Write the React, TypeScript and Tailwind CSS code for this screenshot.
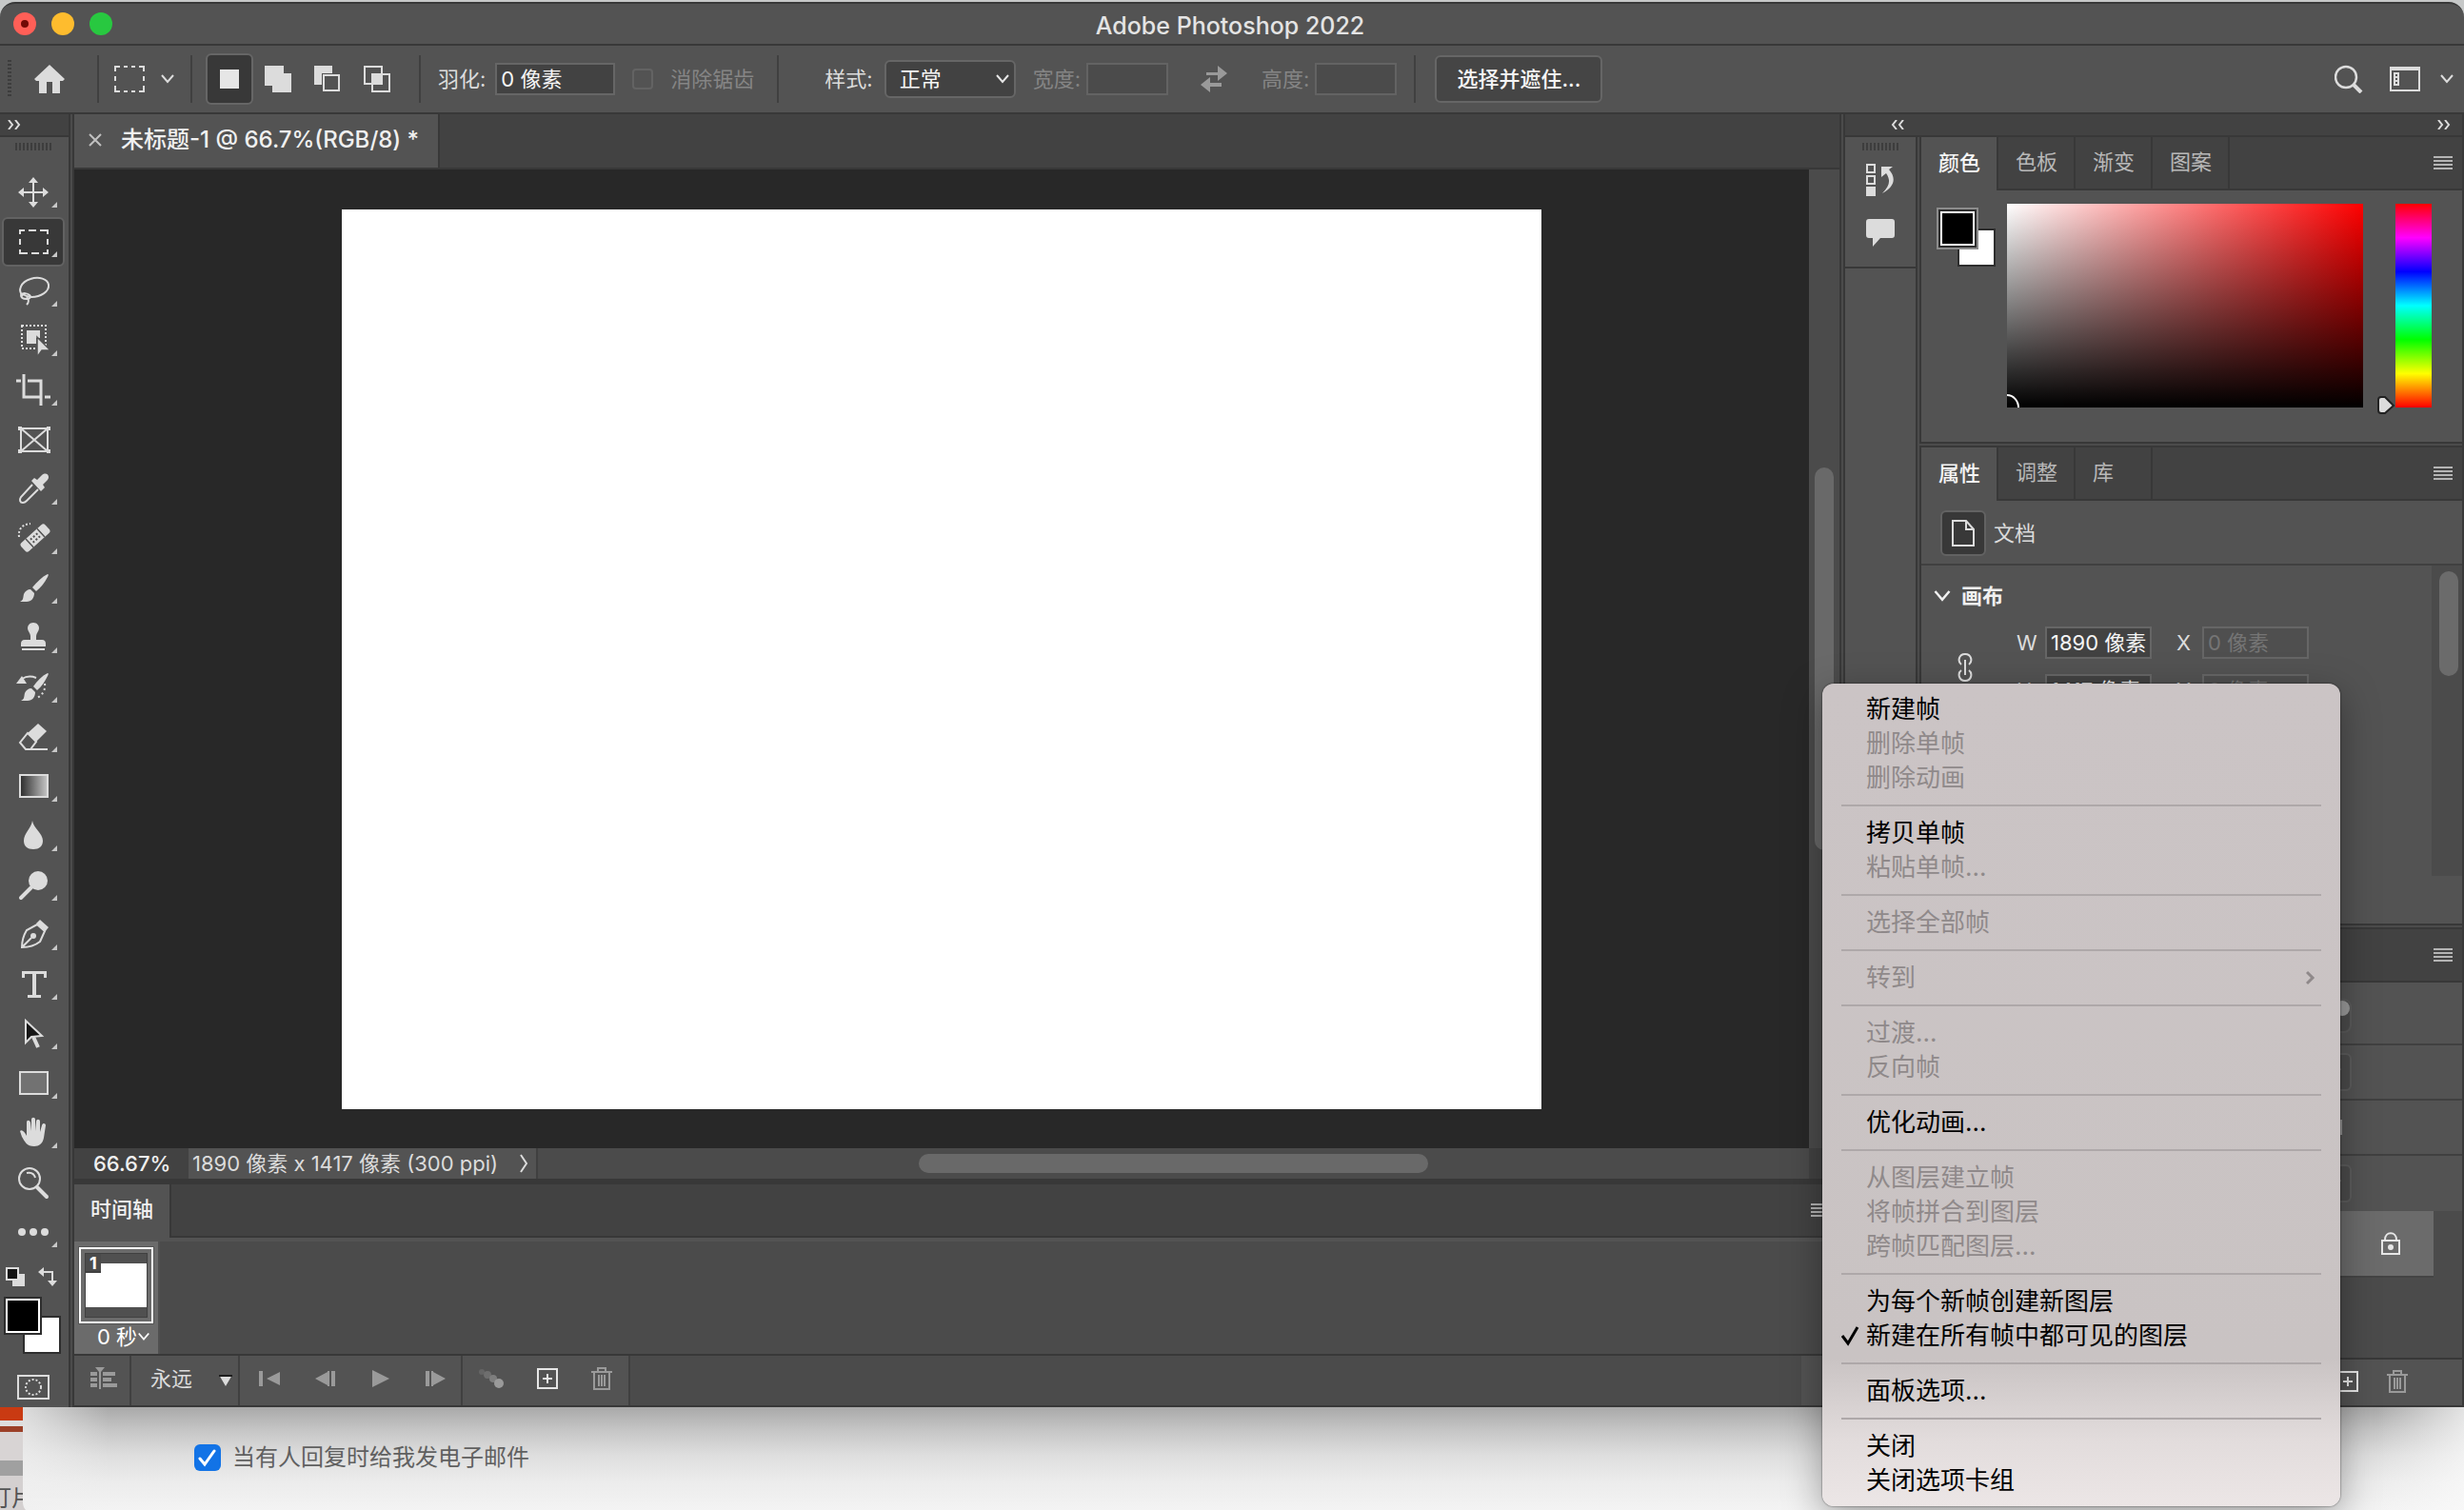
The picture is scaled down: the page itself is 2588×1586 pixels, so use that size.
import { useState, type ReactNode } from 'react'

type ToolType = {
  name: string
  icon: ReactNode
  more?: boolean
}

type MenuItemType = {
  label: string
  disabled?: boolean
  checked?: boolean
  submenu?: boolean
}

const tools: ToolType[] = [
  {
    name: '移动工具',
    more: true,
    icon: (
      <>
        <path d="M18 6v24M6 18h24" stroke="currentColor" strokeWidth="2" />
        <path d="M18 2l5 6H13zM18 34l5-6H13zM2 18l6-5v10zM34 18l-6-5v10z" fill="currentColor" />
      </>
    ),
  },
  {
    name: '矩形选框工具',
    more: true,
    icon: (
      <path
        d="M4 10V6h5M13 6h8M25 6h8v4M33 15v6M33 26v4h-5M24 30h-8M12 30H4v-4M4 21v-6"
        stroke="currentColor"
        strokeWidth="2"
        fill="none"
      />
    ),
  },
  {
    name: '套索工具',
    more: true,
    icon: (
      <g stroke="currentColor" strokeWidth="2" fill="none">
        <path d="M7 23C1 17 5 8 15 5c9-3 18 0 19 6 1 7-8 13-18 13-3 0-6-1-9-3" />
        <path d="M5 22c2-3 7-2 9 0s0 4-3 4-6-1-6-4zM11 24c3 3 2 6 0 8" />
      </g>
    ),
  },
  {
    name: '对象选择工具',
    more: true,
    icon: (
      <>
        <rect x="6" y="2" width="25" height="24" fill="none" stroke="currentColor" strokeWidth="2" strokeDasharray="2 2" />
        <path d="M11 7h14v8h-4v6H11z" fill="currentColor" />
        <path d="M22 14v21l5-7h9z" fill="currentColor" stroke="#535353" strokeWidth="1.5" />
      </>
    ),
  },
  {
    name: '裁剪工具',
    more: true,
    icon: <path d="M8 1v24h18M30 25h6M0 8h5M12 8h14v26" stroke="currentColor" strokeWidth="3" fill="none" />,
  },
  {
    name: '图框工具',
    icon: (
      <>
        <path d="M5 6h28v24H5zM5 6l28 24M33 6L5 30" stroke="currentColor" strokeWidth="2" fill="none" />
        <path d="M2 4h4v4H2zM32 4h4v4h-4zM2 28h4v4H2zM32 28h4v4h-4z" fill="currentColor" />
      </>
    ),
  },
  {
    name: '吸管工具',
    more: true,
    icon: (
      <>
        <path d="M17 13L5 26c-2 3-1 6 2 6 2 0 3-1 4-2l12-12" stroke="currentColor" strokeWidth="2" fill="none" />
        <path d="M16 9l3-3 3 2 5-5c5-4 9 1 6 5l-5 5 2 3-4 4z" fill="currentColor" />
      </>
    ),
  },
  {
    name: '污点修复画笔工具',
    more: true,
    icon: (
      <>
        <g transform="rotate(-42 20 17)">
          <rect x="3" y="11" width="34" height="12" rx="3" fill="currentColor" />
          <path d="M12 11v12M28 11v12" stroke="#535353" strokeWidth="1.5" />
          <path d="M15 14h2v2h-2zM19 14h2v2h-2zM23 14h2v2h-2zM15 18h2v2h-2zM19 18h2v2h-2zM23 18h2v2h-2z" fill="#535353" />
        </g>
        <path d="M3 16C2 8 6 3 15 2" stroke="currentColor" strokeWidth="2" strokeDasharray="2 2" fill="none" />
      </>
    ),
  },
  {
    name: '画笔工具',
    more: true,
    icon: (
      <path
        d="M33 3c1 0 1 1 0 3-3 6-7 11-12 15l-4-4C22 11 27 6 33 3zM15 19l4 4c0 5-3 9-8 9H4c4-2 3-4 4-8 1-3 4-5 7-5z"
        fill="currentColor"
      />
    ),
  },
  {
    name: '仿制图章工具',
    more: true,
    icon: (
      <path
        d="M18 2c4 0 6 3 6 6s-3 5-3 8v4h6c3 0 4 2 4 4v3H5v-3c0-2 1-4 4-4h6v-4c0-3-3-5-3-8s2-6 6-6zM6 29h24v2H6z"
        fill="currentColor"
      />
    ),
  },
  {
    name: '历史记录画笔工具',
    more: true,
    icon: (
      <>
        <path
          d="M33 3c1 0 1 1 0 3-3 6-6 11-11 15l-4-4C22 11 27 6 33 3zM16 19l4 4c0 5-3 9-8 9H5c4-2 3-4 4-8 1-3 4-5 7-5z"
          fill="currentColor"
        />
        <path d="M0 14L6 6l5 8z" fill="currentColor" />
        <path d="M6 9c5-3 10-3 15-1" stroke="currentColor" strokeWidth="2" fill="none" />
        <path d="M30 14c1 6-2 12-8 15" stroke="currentColor" strokeWidth="2" strokeDasharray="2 3" fill="none" />
      </>
    ),
  },
  {
    name: '橡皮擦工具',
    more: true,
    icon: (
      <>
        <path d="M23 4l9 8-11 11-9-9z" fill="currentColor" />
        <path d="M12 14l9 9-6 8H10l-6-7zM14 31h19" stroke="currentColor" strokeWidth="2" fill="none" />
      </>
    ),
  },
  {
    name: '渐变工具',
    more: true,
    icon: (
      <>
        <defs>
          <linearGradient id="tool-gradient">
            <stop offset="0" stopColor="#2a2a2a" />
            <stop offset="1" stopColor="#c8c8c8" />
          </linearGradient>
        </defs>
        <rect x="4" y="6" width="29" height="23" fill="url(#tool-gradient)" stroke="currentColor" strokeWidth="2" />
      </>
    ),
  },
  {
    name: '模糊工具',
    more: true,
    icon: <path d="M17 2c1 8 11 13 11 21 0 6-4 9-10 9S8 29 8 23C8 15 16 10 17 2z" fill="currentColor" />,
  },
  {
    name: '减淡工具',
    more: true,
    icon: (
      <>
        <circle cx="23" cy="13" r="10" fill="currentColor" />
        <path d="M16 20L5 31" stroke="currentColor" strokeWidth="4" strokeLinecap="round" />
      </>
    ),
  },
  {
    name: '钢笔工具',
    more: true,
    icon: (
      <>
        <path d="M6 31c0-7 2-13 5-18l11-6 8 7-5 11c-5 4-11 6-19 6zM6 31l10-10" stroke="currentColor" strokeWidth="2" fill="none" />
        <circle cx="18" cy="19" r="3" fill="currentColor" />
        <path d="M21 6l4-4 9 8-4 5z" fill="currentColor" />
      </>
    ),
  },
  {
    name: '横排文字工具',
    more: true,
    icon: <path d="M6 4h26v7h-3V7h-8v22h5v3H12v-3h5V7H9v4H6z" fill="currentColor" />,
  },
  {
    name: '路径选择工具',
    more: true,
    icon: (
      <>
        <path d="M18 21l5 11" stroke="currentColor" strokeWidth="4" />
        <path d="M10 4v23l6-6 11-1z" fill="#161616" stroke="currentColor" strokeWidth="2" />
      </>
    ),
  },
  {
    name: '矩形工具',
    more: true,
    icon: <rect x="4" y="6" width="29" height="23" fill="#727272" stroke="currentColor" strokeWidth="2" />,
  },
  {
    name: '抓手工具',
    more: true,
    icon: (
      <path
        d="M4 16c2-2 5 1 7 5V7c0-3 3-3 4 0l1 9V4c0-3 4-3 4 0v12l1-10c0-3 4-3 4 0v11l2-7c1-3 4-2 4 0l-2 13c-1 6-5 9-10 9-8 0-10-5-13-10z"
        fill="currentColor"
      />
    ),
  },
  {
    name: '缩放工具',
    icon: (
      <>
        <circle cx="14" cy="14" r="11" fill="none" stroke="currentColor" strokeWidth="2" />
        <path d="M11 8c5-1 8 1 9 5" stroke="currentColor" strokeWidth="2" fill="none" />
        <path d="M22 23l10 10" stroke="currentColor" strokeWidth="4" strokeLinecap="round" />
      </>
    ),
  },
  {
    name: '编辑工具栏',
    more: true,
    icon: (
      <>
        <circle cx="6" cy="18" r="4" fill="currentColor" />
        <circle cx="18" cy="18" r="4" fill="currentColor" />
        <circle cx="30" cy="18" r="4" fill="currentColor" />
      </>
    ),
  },
]

const menuGroups: MenuItemType[][] = [
  [{ label: '新建帧' }, { label: '删除单帧', disabled: true }, { label: '删除动画', disabled: true }],
  [{ label: '拷贝单帧' }, { label: '粘贴单帧...', disabled: true }],
  [{ label: '选择全部帧', disabled: true }],
  [{ label: '转到', disabled: true, submenu: true }],
  [{ label: '过渡...', disabled: true }, { label: '反向帧', disabled: true }],
  [{ label: '优化动画...' }],
  [
    { label: '从图层建立帧', disabled: true },
    { label: '将帧拼合到图层', disabled: true },
    { label: '跨帧匹配图层...', disabled: true },
  ],
  [{ label: '为每个新帧创建新图层' }, { label: '新建在所有帧中都可见的图层', checked: true }],
  [{ label: '面板选项...' }],
  [{ label: '关闭' }, { label: '关闭选项卡组' }],
]

const Chevron = ({ className = 'w-4 h-4' }: { className?: string }) => (
  <svg viewBox="0 0 16 16" className={className} fill="none" stroke="currentColor" strokeWidth="2">
    <path d="M2 4l6 7 6-7" />
  </svg>
)

const DoubleChevron = ({ left }: { left?: boolean }) => (
  <svg viewBox="0 0 14 10" className="w-3.5 h-2.5 text-[#dcdcdc]" fill="none" stroke="currentColor" strokeWidth="2">
    {left ? <path d="M6 0L2 5l4 5M13 0L9 5l4 5" /> : <path d="M1 0l4 5-4 5M8 0l4 5-4 5" />}
  </svg>
)

const PanelMenuButton = () => (
  <button aria-label="面板菜单" className="text-[#b4b4b4]">
    <svg viewBox="0 0 20 16" className="w-5 h-4" fill="currentColor">
      <path d="M0 1h20v2H0zM0 5h20v2H0zM0 9h20v2H0zM0 13h20v2H0z" />
    </svg>
  </button>
)

const Grip = () => (
  <svg viewBox="0 0 38 8" className="w-[38px] h-2" stroke="#3d3d3d" strokeWidth="2">
    <path d="M1 0v8M5 0v8M9 0v8M13 0v8M17 0v8M21 0v8M25 0v8M29 0v8M33 0v8M37 0v8" />
  </svg>
)

const PlusIcon = () => (
  <svg viewBox="0 0 24 24" className="w-6 h-6 text-[#e6e6e6]" fill="none" stroke="currentColor" strokeWidth="2">
    <path d="M2 2h20v20H2zM12 7v10M7 12h10" />
  </svg>
)

const TrashIcon = () => (
  <svg viewBox="0 0 24 26" className="w-6 h-[26px] text-[#9a9a9a]" fill="none" stroke="currentColor" strokeWidth="2">
    <path d="M1 6h22M8 5V2h8v3M4 7v17h16V7M9 9v12M12 9v12M15 9v12" />
  </svg>
)

const Divider = () => <div className="w-0.5 h-[50px] bg-[#404040] shrink-0" />

const TabBar = ({ tabs }: { tabs: string[] }) => (
  <div className="flex h-14 bg-[#424242]">
    {tabs.map((tab, i) => (
      <button
        key={tab}
        className={`w-[81px] shrink-0 pl-[18px] pb-0.5 text-left border-r-2 border-[#383838] ${
          i === 0 ? 'bg-[#535353] text-[#f5f5f5] font-medium' : 'border-b-2 text-[#b8b8b8]'
        }`}
      >
        {tab}
      </button>
    ))}
    <div className="flex-1 flex items-center justify-end pr-2.5 border-b-2 border-[#383838]">
      <PanelMenuButton />
    </div>
  </div>
)

const TitleBar = () => (
  <div className="h-11 flex items-center px-3.5 border-b-2 border-[#383838]">
    <div className="flex-1 flex gap-4">
      <button aria-label="关闭窗口" className="w-6 h-6 rounded-full bg-[#ff5f57] grid place-items-center">
        <span className="w-2 h-2 rounded-full bg-[#700a06]" />
      </button>
      <button aria-label="最小化" className="w-6 h-6 rounded-full bg-[#febc2e]" />
      <button aria-label="缩放" className="w-6 h-6 rounded-full bg-[#28c840]" />
    </div>
    <h1 className="pt-1 pr-1 text-[25px] leading-8 font-medium text-[#e4e4e4]">Adobe Photoshop 2022</h1>
    <div className="flex-1" />
  </div>
)

const OptionsBar = () => (
  <div className="h-[72px] flex items-center border-b-2 border-[#383838] pl-2 pr-2.5 whitespace-nowrap">
    <svg viewBox="0 0 4 40" className="w-1 h-10 mr-6" stroke="#3d3d3d" strokeWidth="4" strokeDasharray="2 2">
      <path d="M2 0v40" />
    </svg>
    <button aria-label="主页">
      <svg viewBox="0 0 32 30" className="w-8 h-[30px]" fill="#dcdcdc">
        <path d="M16 0l16 15-2 2h-3v13h-8V18h-6v12H5V17H2l-2-2z" />
      </svg>
    </button>
    <div className="w-[34px]" />
    <Divider />
    <button aria-label="工具预设" className="flex items-center gap-4 mx-4">
      <svg viewBox="0 0 32 28" className="w-8 h-7" stroke="#dcdcdc" strokeWidth="2" fill="none">
        <path d="M1 6V1h5M10 1h4M18 1h4M26 1h5v5M31 11v5M31 21v6h-5M22 27h-4M14 27h-4M6 27H1v-6M1 16v-5" />
      </svg>
      <Chevron className="w-4 h-4 text-[#dcdcdc]" />
    </button>
    <Divider />
    <div className="flex items-center ml-3.5 mr-[18px] text-[#dcdcdc]">
      <button aria-label="新选区" className="w-[50px] h-[54px] rounded-md bg-[#383838] border-2 border-[#666] grid place-items-center">
        <span className="w-5 h-5 bg-[#e6e6e6]" />
      </button>
      <button aria-label="添加到选区" className="w-[52px] grid place-items-center">
        <svg viewBox="0 0 28 28" className="w-7 h-7" fill="currentColor">
          <path d="M0 0h20v8h8v20H8v-7H0z" />
        </svg>
      </button>
      <button aria-label="从选区减去" className="w-[52px] grid place-items-center">
        <svg viewBox="0 0 28 28" className="w-7 h-7">
          <path d="M0 0h19v8H8v12H0z" fill="currentColor" />
          <path d="M10 10h16v16H10z" fill="none" stroke="currentColor" strokeWidth="2" />
        </svg>
      </button>
      <button aria-label="与选区交叉" className="w-[52px] grid place-items-center">
        <svg viewBox="0 0 28 28" className="w-7 h-7" stroke="currentColor" strokeWidth="2" fill="none">
          <path d="M1 1h18v18H1zM9 9h18v18H9z" />
          <path d="M9 9h10v10H9z" fill="currentColor" />
        </svg>
      </button>
    </div>
    <Divider />
    <label htmlFor="feather" className="ml-[18px] mr-2.5 text-[#dcdcdc]">羽化:</label>
    <input id="feather" defaultValue="0 像素" className="w-[126px] h-[34px] px-1 pb-1 bg-[#424242] border-2 border-[#666] text-[#f5f5f5]" />
    <input
      id="antialias"
      type="checkbox"
      disabled
      className="appearance-none w-[22px] h-[22px] mx-[18px] rounded border-2 border-[#636363]"
    />
    <label htmlFor="antialias" className="text-[#858585] mr-6">消除锯齿</label>
    <Divider />
    <label htmlFor="style" className="ml-12 mr-3 text-[#dcdcdc]">样式:</label>
    <div className="grid items-center">
      <select
        id="style"
        className="col-start-1 row-start-1 appearance-none w-[138px] h-10 pl-3.5 rounded-md bg-[#424242] border-2 border-[#666] text-[#f5f5f5]"
      >
        <option>正常</option>
      </select>
      <Chevron className="col-start-1 row-start-1 justify-self-end w-4 h-4 mr-1.5 text-[#e6e6e6] pointer-events-none" />
    </div>
    <label htmlFor="width" className="ml-[18px] mr-1.5 text-[#858585]">宽度:</label>
    <input id="width" disabled className="w-[86px] h-[34px] border-2 border-[#636363] bg-[#4b4b4b]" />
    <button aria-label="高度和宽度互换" className="ml-[34px] mr-9">
      <svg viewBox="0 0 28 28" className="w-7 h-7" fill="#9a9a9a">
        <path d="M6 7h12V0l10 8-10 8v-6H6zM22 18H10v-6L0 20l10 8v-6h12z" />
      </svg>
    </button>
    <label htmlFor="height" className="mr-1.5 text-[#858585]">高度:</label>
    <input id="height" disabled className="w-[86px] h-[34px] border-2 border-[#636363] bg-[#4b4b4b] mr-[18px]" />
    <Divider />
    <button className="ml-5 w-[176px] h-[50px] rounded-md bg-[#454545] border-2 border-[#666] text-[#f5f5f5] font-medium">选择并遮住...</button>
    <div className="flex-1" />
    <button aria-label="搜索">
      <svg viewBox="0 0 30 30" className="w-[30px] h-[30px]" fill="none" stroke="#dcdcdc">
        <circle cx="12" cy="13" r="11" strokeWidth="2.5" />
        <path d="M20 21l8 8" strokeWidth="4" />
      </svg>
    </button>
    <button aria-label="选择工作区" className="flex items-center gap-5 ml-7 text-[#dcdcdc]">
      <svg viewBox="0 0 32 26" className="w-8 h-[26px]">
        <path d="M0 0h32v26H0zM2 4v20h28V4z" fill="currentColor" fillRule="evenodd" />
        <path d="M4 6h6v14H4zM6 8v2h2V8zM6 12v2h2v-2zM6 16v2h2v-2z" fill="currentColor" fillRule="evenodd" />
      </svg>
      <Chevron className="w-4 h-4" />
    </button>
  </div>
)

const Toolbar = ({ active, onSelect }: { active: string; onSelect: (name: string) => void }) => (
  <div className="w-[78px] shrink-0 flex flex-col border-r-2 border-[#383838] bg-[#4b4b4b]">
    <div className="w-[74px] flex-1 flex flex-col bg-[#535353] border-r-2 border-[#383838]">
      <div className="h-6 bg-[#424242] border-b-2 border-[#383838] pl-2 flex items-center">
        <DoubleChevron />
      </div>
      <div className="h-8 pt-1.5 pl-4">
        <Grip />
      </div>
      {tools.map((tool) => (
        <button
          key={tool.name}
          aria-label={tool.name}
          onClick={() => onSelect(tool.name)}
          className={`w-[66px] h-[52px] ml-0.5 pl-[13px] flex items-end rounded-md border-2 text-[#dcdcdc] ${
            active === tool.name ? 'bg-[#383838] border-[#626262]' : 'border-transparent'
          }`}
        >
          <svg viewBox="0 0 36 36" className="w-9 h-9 shrink-0 self-center">
            {tool.icon}
          </svg>
          {tool.more && (
            <svg viewBox="0 0 6 6" className="w-1.5 h-1.5 mb-2 ml-px shrink-0" fill="#c8c8c8">
              <path d="M6 0v6H0z" />
            </svg>
          )}
        </button>
      ))}
      <div className="h-[42px] px-1.5 flex justify-between items-center">
        <button aria-label="默认前景色和背景色">
          <svg viewBox="0 0 20 20" className="w-5 h-5">
            <path d="M7 7h13v13H7z" fill="#dcdcdc" />
            <path d="M1 1h12v12H1z" fill="#111" stroke="#dcdcdc" strokeWidth="2" />
          </svg>
        </button>
        <button aria-label="切换前景色和背景色" className="mr-1.5">
          <svg viewBox="0 0 20 20" className="w-5 h-5">
            <path d="M5 5h10v10" stroke="#dcdcdc" strokeWidth="2" fill="none" />
            <path d="M0 5l6-5v10zM15 20l-5-6h10z" fill="#dcdcdc" />
          </svg>
        </button>
      </div>
      <div className="relative h-[60px] mx-1">
        <button aria-label="背景色" className="absolute left-5 top-5 w-10 h-10 bg-white border-2 border-[#2e2e2e]" />
        <button aria-label="前景色" className="absolute left-0 top-0 w-10 h-10 p-0.5 bg-[#2e2e2e]">
          <span className="block h-full bg-black border-2 border-white" />
        </button>
      </div>
      <button aria-label="以快速蒙版模式编辑" className="ml-[18px] mt-[22px] mb-2">
        <svg viewBox="0 0 34 26" className="w-[34px] h-[26px]" fill="none" stroke="#dcdcdc" strokeWidth="2">
          <path d="M1 1h32v24H1z" />
          <circle cx="17" cy="13" r="8" strokeDasharray="2 2" />
        </svg>
      </button>
    </div>
  </div>
)

const DocumentArea = () => (
  <div className="flex-1 flex flex-col min-w-0">
    <div className="flex h-[58px] bg-[#424242] border-b-2 border-[#383838]">
      <div className="w-[384px] pb-0.5 bg-[#535353] border-r-2 border-[#383838] flex items-center gap-5 pl-[15px]">
        <button aria-label="关闭文档">
          <svg viewBox="0 0 14 14" className="w-3.5 h-3.5" stroke="#c0c0c0" strokeWidth="2">
            <path d="M1 1l12 12M13 1L1 13" />
          </svg>
        </button>
        <span className="text-[24px] font-medium text-[#f0f0f0] whitespace-nowrap">未标题-1 @ 66.7%(RGB/8) *</span>
      </div>
    </div>
    <div className="flex-1 flex">
      <div className="flex-1 bg-[#282828] flex items-center justify-center">
        <div className="w-[1260px] h-[945px] bg-white" />
      </div>
      <div className="w-8 bg-[#4b4b4b] flex flex-col items-center">
        <div className="flex-[313]" />
        <div className="w-5 flex-[402] rounded-full bg-[#696969]" />
        <div className="flex-[313]" />
      </div>
    </div>
    <div className="flex h-[38px] bg-[#4b4b4b] border-b-6 border-[#383838] whitespace-nowrap">
      <div className="w-[120px] pl-5 bg-[#424242] text-[#f0f0f0] font-medium">66.67%</div>
      <div className="w-[367px] pl-1 bg-[#535353] border-r-2 border-[#404040] text-[#dcdcdc] flex items-center justify-between pr-2">
        <span>1890 像素 x 1417 像素 (300 ppi)</span>
        <svg viewBox="0 0 10 20" className="w-2.5 h-5" fill="none" stroke="currentColor" strokeWidth="2">
          <path d="M2 1l6 9-6 9" />
        </svg>
      </div>
      <div className="flex-1 flex items-center">
        <div className="flex-[400]" />
        <div className="flex-[536] h-5 rounded-full bg-[#696969]" />
        <div className="flex-[400]" />
      </div>
      <div className="w-8 bg-[#424242]" />
    </div>
    <Timeline />
  </div>
)

const Timeline = () => (
  <div className="bg-[#4b4b4b]">
    <div className="flex h-14 bg-[#424242]">
      <button className="w-[102px] pb-1 bg-[#535353] border-r-2 border-[#383838] text-[#f0f0f0] font-medium">时间轴</button>
      <div className="flex-1 border-b-2 border-[#383838] flex items-center justify-end pr-2.5">
        <PanelMenuButton />
      </div>
    </div>
    <div className="h-[122px] border-t-4 border-[#535353]">
      <div className="w-[90px] h-full pt-1.5 bg-[#6b6b6b] border-r-2 border-[#505050] flex flex-col items-center">
        <div className="w-[78px] h-20 border-2 border-white outline-1 outline-[#555] p-1">
          <div className="relative h-full bg-[#505050] py-2.5 border border-[#404040]">
            <div className="h-full bg-white" />
            <span className="absolute left-0 top-0 w-4 h-5 leading-5 text-center text-[18px] font-bold text-white bg-[#4b4b4b] border-b-2 border-[#404040]">1</span>
          </div>
        </div>
        <button className="flex items-center self-end pr-2 leading-7 text-white">
          0 秒<Chevron className="w-3.5 h-3.5" />
        </button>
      </div>
    </div>
    <div className="flex h-14 border-t-2 border-b-2 border-[#383838]">
      <button aria-label="转换为视频时间轴" className="w-[60px] pl-1 pb-1 bg-[#535353] border-r-2 border-[#404040] grid place-items-center">
        <svg viewBox="0 0 28 26" className="w-7 h-[26px]" fill="#9a9a9a">
          <path d="M0 6h7v4H0zM13 6h13v4H13zM0 12h7v4H0zM13 12h9v4h-9zM0 18h7v4H0zM13 18h15v4H13zM5 1h10l-4 5v18H9V6z" />
        </svg>
      </button>
      <div className="grid items-center w-[114px] bg-[#535353] border-r-2 border-[#404040]">
        <select aria-label="循环选项" className="col-start-1 row-start-1 appearance-none w-full h-full pl-5 pb-1 text-[#dcdcdc]">
          <option>永远</option>
        </select>
        <svg viewBox="0 0 14 12" className="col-start-1 row-start-1 justify-self-end mr-1.5 w-3.5 h-3 pointer-events-none">
          <path d="M0 0h14l-7 12z" fill="#dcdcdc" />
          <path d="M0 0h14v2H0z" fill="#1e1e1e" />
        </svg>
      </div>
      <div className="flex items-center justify-between w-[234px] pl-5 pr-4 pb-1 bg-[#535353] border-r-2 border-[#404040] text-[#9a9a9a]">
        <button aria-label="选择第一帧">
          <svg viewBox="0 0 22 16" className="w-[22px] h-4" fill="currentColor">
            <path d="M0 0h4v16H0zM22 1v14L8 8z" />
          </svg>
        </button>
        <button aria-label="选择上一帧">
          <svg viewBox="0 0 22 16" className="w-[22px] h-4" fill="currentColor">
            <path d="M0 8l13-7v14zM13 0h2v16h-2zM17 0h4v16h-4z" />
          </svg>
        </button>
        <button aria-label="播放动画">
          <svg viewBox="0 0 18 20" className="w-[18px] h-5" fill="currentColor">
            <path d="M0 1l18 9-18 9z" />
          </svg>
        </button>
        <button aria-label="选择下一帧">
          <svg viewBox="0 0 22 16" className="w-[22px] h-4" fill="currentColor">
            <path d="M1 0h4v16H1zM7 0h2v16H7zM9 1v14l13-7z" />
          </svg>
        </button>
      </div>
      <div className="flex items-center justify-between w-[176px] px-4 pb-1 bg-[#535353] border-r-2 border-[#404040]">
        <button aria-label="过渡动画帧">
          <svg viewBox="0 0 28 26" className="w-7 h-[26px]">
            <circle cx="4" cy="6" r="3" fill="#656565" />
            <circle cx="10" cy="9" r="4" fill="#6e6e6e" />
            <circle cx="16" cy="13" r="4" fill="#7e7e7e" />
            <circle cx="22" cy="18" r="5" fill="#9a9a9a" />
          </svg>
        </button>
        <button aria-label="复制所选帧">
          <PlusIcon />
        </button>
        <button aria-label="删除所选帧">
          <TrashIcon />
        </button>
      </div>
      <div className="flex-1" />
      <div className="w-10 bg-[#535353]" />
    </div>
  </div>
)

const ColorPanel = () => (
  <div className="h-[322px] border-b-2 border-[#383838]">
    <TabBar tabs={['颜色', '色板', '渐变', '图案']} />
    <div className="flex pt-3.5 pl-4 pr-8">
      <div className="relative w-16 h-16 mt-1 mr-2.5 shrink-0">
        <button aria-label="设置背景色" className="absolute right-0.5 bottom-0.5 w-10 h-10 bg-white border-2 border-[#2e2e2e]" />
        <button aria-label="设置前景色" className="absolute left-0 top-0 w-11 h-11 p-0.5 bg-[#8c8c8c]">
          <span className="block w-10 h-10 bg-[#2e2e2e] p-0.5">
            <span className="block w-9 h-9 bg-black border-2 border-white" />
          </span>
        </button>
      </div>
      <div className="flex-1 h-[214px] bg-[linear-gradient(to_top,#000,transparent),linear-gradient(to_right,#fff,#f00)] flex items-end">
        <svg viewBox="0 0 14 14" className="w-3.5 h-3.5" fill="none" stroke="#fff" strokeWidth="2">
          <path d="M0 1a12 13 0 0 1 12 13" />
        </svg>
      </div>
      <div className="w-[34px] -mb-2 flex justify-end items-end shrink-0">
        <svg viewBox="0 0 20 20" className="w-5 h-5" fill="#dcdcdc" stroke="#222" strokeWidth="2">
          <path d="M5 1h4l9 9-9 8H5c-2 0-3-1-3-3V4c0-2 1-3 3-3z" />
        </svg>
      </div>
      <div className="w-[38px] h-[214px] shrink-0 bg-[linear-gradient(to_bottom,#f00,#f0f,#00f,#0ff,#0f0,#ff0,#f00)]" />
    </div>
  </div>
)

const fieldClass = 'w-[112px] h-[34px] px-1 pb-1 border-2 border-[#666]'

const PropertiesPanel = () => (
  <div className="h-[502px] flex flex-col border-b-2 border-[#383838]">
    <TabBar tabs={['属性', '调整', '库']} />
    <div className="h-[68px] pt-0.5 flex items-center gap-2 pl-5 border-b-2 border-[#404040] text-[#dcdcdc] shrink-0">
      <div className="w-12 h-12 rounded-md bg-[#383838] border-2 border-[#626262] grid place-items-center">
        <svg viewBox="0 0 24 28" className="w-6 h-7" fill="none" stroke="#dcdcdc" strokeWidth="2">
          <path d="M1 1h14l8 9v17H1zM15 1v9h8" />
        </svg>
      </div>
      文档
    </div>
    <div className="flex-1 flex">
      <div className="flex-1">
        <button className="flex items-center gap-2.5 h-16 pl-3 text-[#f0f0f0] font-bold">
          <Chevron className="w-5 h-5" />画布
        </button>
        <div className="flex">
          <svg viewBox="0 0 16 30" className="w-4 h-[30px] mt-7 ml-[38px] mr-[46px]" fill="none" stroke="#dcdcdc" strokeWidth="2">
            <path d="M4 12C0 9 1 1 8 1s8 8 4 11M4 18c-4 3-3 11 4 11s8-8 4-11M8 7v16" />
          </svg>
          <div className="grid grid-cols-[30px_138px_27px_112px] gap-y-4 items-center text-[#dcdcdc]">
            <label htmlFor="canvas-w">W</label>
            <input id="canvas-w" defaultValue="1890 像素" className={`${fieldClass} bg-[#424242] text-[#f5f5f5]`} />
            <label htmlFor="canvas-x">X</label>
            <input id="canvas-x" disabled value="0 像素" className={`${fieldClass} bg-[#4f4f4f] text-[#757575]`} />
            <label htmlFor="canvas-h">H</label>
            <input id="canvas-h" defaultValue="1417 像素" className={`${fieldClass} bg-[#424242] text-[#f5f5f5]`} />
            <label htmlFor="canvas-y">Y</label>
            <input id="canvas-y" disabled value="0 像素" className={`${fieldClass} bg-[#4f4f4f] text-[#757575]`} />
          </div>
        </div>
      </div>
      <div className="w-8 mb-[50px] bg-[#4b4b4b] flex justify-center pt-1.5 pl-1">
        <div className="w-5 h-[110px] rounded-full bg-[#6b6b6b]" />
      </div>
    </div>
  </div>
)

const LayersPanel = () => (
  <div className="flex-1 flex flex-col">
    <div className="flex h-14 shrink-0 items-center justify-end pr-2.5 bg-[#424242] border-b-2 border-[#383838]">
      <PanelMenuButton />
    </div>
    <div className="h-[66px] pt-1.5 flex justify-end items-center pr-[116px] border-b-2 border-[#404040]">
      <div className="w-5 h-9 rounded-lg bg-[#4b4b4b] border-2 border-[#5a5a5a]">
        <div className="w-4 h-4 rounded-full bg-[#9a9a9a]" />
      </div>
    </div>
    <div className="h-[58px] flex justify-end items-center pr-[116px] border-b-2 border-[#404040]">
      <div className="w-28 h-10 pr-2 flex items-center justify-end rounded-md bg-[#4b4b4b] border-2 border-[#5c5c5c] text-[#858585]">
        <Chevron className="w-3.5 h-3.5" />
      </div>
    </div>
    <div className="h-[58px] flex justify-end items-center pr-[126px] border-b-2 border-[#404040]">
      <div className="w-2 h-4 bg-[#9a9a9a]" />
    </div>
    <div className="h-[58px] flex justify-end items-center pr-[116px]">
      <div className="w-28 h-10 pr-2 flex items-center justify-end rounded-md bg-[#4b4b4b] border-2 border-[#5c5c5c] text-[#858585]">
        <Chevron className="w-3.5 h-3.5" />
      </div>
    </div>
    <div className="flex-1 bg-[#4b4b4b] pr-[30px]">
      <div className="h-[70px] bg-[#6b6b6b] border-b-2 border-[#444] flex items-center justify-end pr-[34px]">
        <svg viewBox="0 0 22 26" className="w-[22px] h-[26px]" fill="none" stroke="#e6e6e6" strokeWidth="2">
          <path d="M2 10h18v14H2zM5 9C5 0 17 0 17 9" />
          <circle cx="11" cy="17" r="2" fill="#e6e6e6" />
        </svg>
      </div>
    </div>
    <div className="h-[52px] pb-0.5 flex items-center justify-end gap-7 pr-14 border-t-2 border-b-2 border-[#383838]">
      <button aria-label="创建新图层">
        <PlusIcon />
      </button>
      <button aria-label="删除图层">
        <TrashIcon />
      </button>
    </div>
  </div>
)

const RightDock = () => (
  <div className="w-[656px] shrink-0 flex flex-col border-l-2 border-r-2 border-[#383838] bg-[#4b4b4b] pl-0.5">
    <div className="flex-1 flex flex-col border-l-2 border-[#383838]">
      <div className="flex h-6 items-center bg-[#424242] border-b-2 border-[#383838] pr-3">
        <div className="w-[62px] flex justify-end">
          <DoubleChevron left />
        </div>
        <div className="flex-1 flex justify-end">
          <DoubleChevron />
        </div>
      </div>
      <div className="flex-1 flex">
        <div className="w-[76px] bg-[#535353] border-r-2 border-[#383838]">
          <div className="h-[138px] pt-1.5 border-b-2 border-[#383838] flex flex-col items-center">
            <Grip />
            <button aria-label="历史记录" className="mt-3.5">
              <svg viewBox="0 0 30 34" className="w-[30px] h-[34px]">
                <path d="M1 1h8v8H1zM1 13h8v8H1z" fill="none" stroke="#dcdcdc" strokeWidth="2" />
                <path d="M0 24h10v10H0zM16 3h12l-4 3c8 9 6 18-7 25 8-8 9-14 4-21l-5 4z" fill="#dcdcdc" />
              </svg>
            </button>
            <button aria-label="注释" className="mt-6">
              <svg viewBox="0 0 30 30" className="w-[30px] h-[30px]" fill="#dcdcdc">
                <path d="M3 0h24c2 0 3 1 3 3v14c0 2-1 3-3 3H15l-8 9v-9H3c-2 0-3-1-3-3V3c0-2 1-3 3-3z" />
              </svg>
            </button>
          </div>
        </div>
        <div className="flex-1 flex flex-col gap-0.5 bg-[#4b4b4b] pl-0.5">
          <div className="bg-[#535353] border-l-2 border-[#383838]">
            <ColorPanel />
          </div>
          <div className="bg-[#535353] border-l-2 border-t-2 border-[#383838]">
            <PropertiesPanel />
          </div>
          <div className="flex-1 flex flex-col bg-[#535353] border-l-2 border-t-2 border-[#383838]">
            <LayersPanel />
          </div>
        </div>
      </div>
    </div>
  </div>
)

const TimelineMenu = () => (
  <div
    role="menu"
    className="absolute z-20 right-[130px] top-[718px] w-[544px] py-[9px] px-5 rounded-xl bg-[linear-gradient(to_bottom,#cbc4c5_0%,#c9c3c3_82%,#e2dcdc_92%,#ece6e6_100%)] text-[26px] shadow-[0_0_2px_rgba(0,0,0,0.7),0_12px_40px_rgba(0,0,0,0.35)]"
  >
    {menuGroups.map((group, i) => (
      <div key={i} className={i > 0 ? 'mt-2.5 pt-2.5 border-t-2 border-[#aea8a9]' : ''}>
        {group.map((item) => (
          <button
            key={item.label}
            role="menuitem"
            disabled={item.disabled}
            className={`w-full h-9 flex items-center text-left leading-9 ${item.disabled ? 'text-[#8f898a]' : 'text-black'}`}
          >
            <span className="w-[26px] shrink-0">
              {item.checked && (
                <svg viewBox="0 0 20 22" className="w-5 h-[22px]" fill="none" stroke="currentColor" strokeWidth="3">
                  <path d="M1 11l6 8L17 2" />
                </svg>
              )}
            </span>
            <span className="flex-1">{item.label}</span>
            {item.submenu && (
              <svg viewBox="0 0 10 16" className="w-2.5 h-4 mr-1.5" fill="none" stroke="currentColor" strokeWidth="3">
                <path d="M1 2l6 6-6 6" />
              </svg>
            )}
          </button>
        ))}
      </div>
    ))}
  </div>
)

const App = () => {
  const [activeTool, setActiveTool] = useState('矩形选框工具')

  return (
    <div className="relative min-h-screen flex flex-col overflow-hidden bg-[#c6c8c8] pt-0.5 text-[22px] leading-8 font-['Inter','Noto_Sans_CJK_SC',sans-serif]">
      {/* Application window */}
      <div className="flex flex-col bg-[#535353] border-t-2 border-[#383838] rounded-t-2xl overflow-hidden">
        <TitleBar />
        <OptionsBar />
        <div className="flex">
          <Toolbar active={activeTool} onSelect={setActiveTool} />
          <DocumentArea />
          <RightDock />
        </div>
      </div>

      {/* Pages behind the window */}
      <div className="flex-1 min-h-[108px] flex bg-[#d4d0d0]">
        <div className="w-6 overflow-hidden flex flex-col">
          <div className="h-3.5 bg-[#c93a12]" />
          <div className="h-1.5 bg-[#dedede]" />
          <div className="h-1.5 bg-[#9c4028]" />
          <div className="h-[30px] bg-[#d8d4d4]" />
          <div className="h-4 bg-[#a0a0a0]" />
          <div className="flex justify-center pt-2 text-[#555] text-[24px] whitespace-nowrap">灯片</div>
        </div>
        <div className="flex-1 pl-[180px] pt-[37px] rounded-bl-xl bg-[linear-gradient(to_right,rgba(240,240,240,0.7),transparent_90px),linear-gradient(to_left,rgba(250,250,250,0.7),transparent_90px),linear-gradient(to_bottom,#a9a9a9_0%,#c6c6c6_22%,#dedede_45%,#ececec_70%,#f4f4f4_100%)]">
          <label className="w-fit flex items-center gap-3 text-[24px] leading-8 text-[#606060]">
            <input type="checkbox" defaultChecked className="peer sr-only" />
            <span className="w-7 h-7 rounded-md bg-[#1273e6] grid place-items-center">
              <svg viewBox="0 0 20 20" className="w-5 h-5" fill="none" stroke="#fff" strokeWidth="3" strokeLinecap="round">
                <path d="M2 11l5 6L17 3" />
              </svg>
            </span>
            当有人回复时给我发电子邮件
          </label>
        </div>
      </div>

      <TimelineMenu />
    </div>
  )
}

export default App
